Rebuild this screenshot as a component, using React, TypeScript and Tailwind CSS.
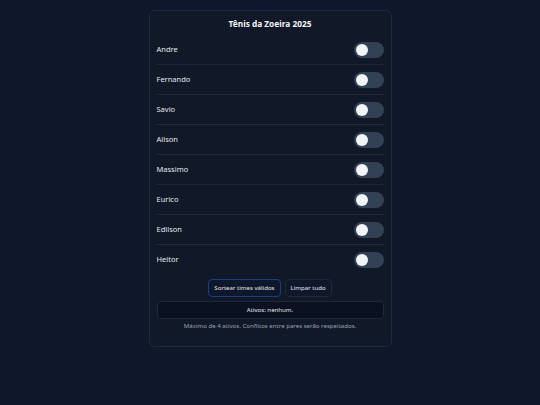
import React from "react";

const names = ["Andre", "Fernando", "Savio", "Ailson", "Massimo", "Eurico", "Edilson", "Heitor"];

function Toggle() {
  return (
    <div className="w-[30px] h-[16px] rounded-full bg-[#334155] flex items-center px-[2px]">
      <div className="w-[12px] h-[12px] rounded-full bg-[#f1f5f9]" />
    </div>
  );
}

export default function App() {
  return (
    <div className="min-h-[405px] w-full bg-[#0f172a] flex justify-center pt-[10px]" style={{ fontFamily: "'Noto Sans', sans-serif" }}>
      <div className="w-[243px] h-[337px] rounded-[6px] border border-[#1e293b] bg-[#111827] px-[7px] flex flex-col">
        <div className="h-[24px] pt-[3px] flex items-center justify-center text-[8.3px] font-bold text-[#f1f5f9]">Tênis da Zoeira 2025</div>
        <div className="flex flex-col">
          {names.map((n, i) => (
            <div key={n} className={"h-[30px] flex items-center justify-between " + (i < names.length - 1 ? "border-b border-[#1e293b]" : "")}>
              <span className="text-[7.5px] text-[#e2e8f0]">{n}</span>
              <Toggle />
            </div>
          ))}
        </div>
        <div className="mt-[4px] flex justify-center gap-[4px]">
          <button className="h-[18px] px-[5px] rounded-[4px] border border-[#1e3a8a] bg-[#0f172a] text-[6.1px] text-[#e2e8f0]">Sortear times válidos</button>
          <button className="h-[18px] px-[5px] rounded-[4px] border border-[#1f2937] bg-[#0f172a] text-[6.1px] text-[#e2e8f0]">Limpar tudo</button>
        </div>
        <div className="mt-[4px] h-[18px] rounded-[4px] border border-[#1e293b] bg-[#0b1120] flex items-center justify-center text-[6.1px] text-[#e2e8f0]">Ativos: nenhum.</div>
        <div className="mt-[2px] text-center text-[6.1px] text-[#94a3b8]">Máximo de 4 ativos. Conflitos entre pares serão respeitados.</div>
      </div>
    </div>
  );
}
